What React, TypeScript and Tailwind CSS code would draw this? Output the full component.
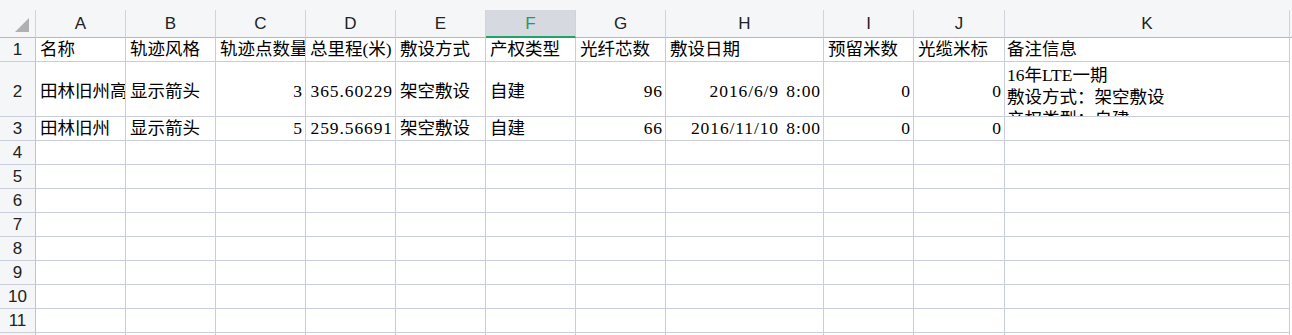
import React from 'react';

type Cell = { text?: string; right?: boolean };

const COLS = [
  { key: 'A', w: 'w-[90px]' },
  { key: 'B', w: 'w-[90px]' },
  { key: 'C', w: 'w-[90px]' },
  { key: 'D', w: 'w-[90px]' },
  { key: 'E', w: 'w-[90px]' },
  { key: 'F', w: 'w-[90px]' },
  { key: 'G', w: 'w-[90px]' },
  { key: 'H', w: 'w-[158px]' },
  { key: 'I', w: 'w-[90px]' },
  { key: 'J', w: 'w-[91px]' },
  { key: 'K', w: 'w-[285px]' },
];

const ROWS: Cell[][] = [
  [
    { text: '名称' },
    { text: '轨迹风格' },
    { text: '轨迹点数量' },
    { text: '总里程(米)' },
    { text: '敷设方式' },
    { text: '产权类型' },
    { text: '光纤芯数' },
    { text: '敷设日期' },
    { text: '预留米数' },
    { text: '光缆米标' },
    { text: '备注信息' },
  ],
  [
    { text: '田林旧州高压线路' },
    { text: '显示箭头' },
    { text: '3', right: true },
    { text: '365.60229', right: true },
    { text: '架空敷设' },
    { text: '自建' },
    { text: '96', right: true },
    { text: '2016/6/9 8:00', right: true },
    { text: '0', right: true },
    { text: '0', right: true },
    {},
  ],
  [
    { text: '田林旧州' },
    { text: '显示箭头' },
    { text: '5', right: true },
    { text: '259.56691', right: true },
    { text: '架空敷设' },
    { text: '自建' },
    { text: '66', right: true },
    { text: '2016/11/10 8:00', right: true },
    { text: '0', right: true },
    { text: '0', right: true },
    {},
  ],
];

const EMPTY_ROWS = [4, 5, 6, 7, 8, 9, 10, 11, 12];

const cellFont = "font-['Liberation_Serif','Noto_Sans_CJK_SC',serif] text-[17.5px] text-black";
const headFont = "font-['Liberation_Sans','Noto_Sans',sans-serif] text-[17px] text-[#222]";

function RowHead({ n, tall }: { n: number; tall?: boolean }) {
  return (
    <div
      className={`flex w-[36px] shrink-0 justify-center border-r border-b border-r-[#bfc3ce] border-b-[#c9cdd9] bg-[#f5f6f8] ${headFont} ${
        tall ? 'items-center pt-[5px]' : 'items-center'
      }`}
    >
      {n}
    </div>
  );
}

export default function App() {
  return (
    <div className="h-[335px] w-[1292px] overflow-hidden bg-white">
      {/* column headers */}
      <div className="flex h-[38px] items-end bg-[#f5f6f8]">
        <div className="flex h-[28px] w-[36px] shrink-0 items-end justify-end border-r border-b border-r-[#d0d3da] border-b-[#b3b8c5] pr-[6px] pb-[5px]">
          <svg width="14" height="14" viewBox="0 0 14 14">
            <polygon points="14,0 14,14 0,14" fill="#b0b0b0" />
          </svg>
        </div>
        {COLS.map((c) =>
          c.key === 'F' ? (
            <div
              key={c.key}
              className={`${c.w} flex h-[28px] shrink-0 items-center justify-center border-r border-b-2 border-r-[#d0d3da] border-b-[#21a366] bg-[#d6d9df] pt-[1px] font-['Liberation_Sans','Noto_Sans',sans-serif] text-[17px] text-[#1f9d61]`}
            >
              {c.key}
            </div>
          ) : (
            <div
              key={c.key}
              className={`${c.w} flex h-[28px] shrink-0 items-center justify-center border-r border-b border-r-[#d0d3da] border-b-[#b3b8c5] ${headFont}`}
            >
              {c.key}
            </div>
          )
        )}
        <div className="h-[28px] flex-1 border-b border-b-[#b3b8c5]" />
      </div>

      {/* data rows */}
      {ROWS.map((row, ri) => {
        const tall = ri === 1;
        return (
          <div key={ri} className={`flex ${tall ? 'h-[55px]' : 'h-[24px]'}`}>
            <RowHead n={ri + 1} tall={tall} />
            {row.map((cell, ci) => {
              const col = COLS[ci];
              if (tall && col.key === 'K') {
                return (
                  <div
                    key={ci}
                    className={`${col.w} shrink-0 overflow-hidden border-r border-b border-[#c9cdd9] pt-[2px] pl-[2px] leading-[22px] ${cellFont}`}
                  >
                    <div>16年LTE一期</div>
                    <div>敷设方式：架空敷设</div>
                    <div>产权类型：自建</div>
                  </div>
                );
              }
              return (
                <div
                  key={ci}
                  className={`${col.w} flex shrink-0 items-center overflow-hidden whitespace-nowrap border-r border-b border-[#c9cdd9] ${cellFont} ${
                    cell.right
                      ? 'justify-end pr-[2px] tracking-[0.9px] [word-spacing:2px]'
                      : col.key === 'K'
                        ? 'pl-[2px]'
                        : 'pl-[4px]'
                  } ${tall ? 'pt-[5px]' : ''}`}
                >
                  {cell.text}
                </div>
              );
            })}
          </div>
        );
      })}

      {EMPTY_ROWS.map((n) => (
        <div key={n} className="flex h-[24px]">
          <RowHead n={n} />
          {COLS.map((c) => (
            <div key={c.key} className={`${c.w} shrink-0 border-r border-b border-[#c9cdd9]`} />
          ))}
        </div>
      ))}
    </div>
  );
}
